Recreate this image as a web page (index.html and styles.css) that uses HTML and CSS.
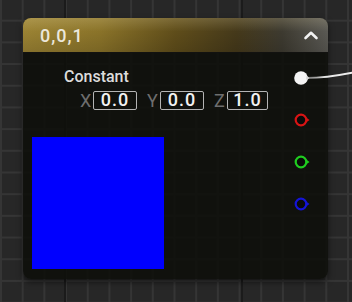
FILE: index.html
```html
<!DOCTYPE html>
<html lang="en">
<head>
    <meta charset="UTF-8">
    <meta name="viewport" content="width=device-width, initial-scale=1.0">
    <title>Constant3Vector</title>
    <link rel="stylesheet" href="styles.css">
</head>
<body>
    <div class="canvas">
        <svg class="wire" width="50" height="20" viewBox="0 0 50 20">
            <defs>
                <linearGradient id="wire-fade" x1="0" x2="1" y1="0" y2="0">
                    <stop offset="0" stop-color="#cfcfcf" stop-opacity="0.5"/>
                    <stop offset="0.4" stop-color="#e8e8e8"/>
                    <stop offset="1" stop-color="#f0f0f0"/>
                </linearGradient>
            </defs>
            <path d="M0 12 C 14 12, 26 11, 50 6" fill="none" stroke="url(#wire-fade)" stroke-width="2"/>
        </svg>

        <div class="node">
            <div class="node-header">
                <span class="node-title">0,0,1</span>
                <svg class="collapse" width="16" height="10" viewBox="0 0 16 10">
                    <path d="M2.5 8 L8 2.8 L13.5 8" fill="none" stroke="#f2f2f2" stroke-width="2.6" stroke-linecap="round" stroke-linejoin="round"/>
                </svg>
            </div>
            <div class="node-body">
                <div class="node-main">
                    <div class="node-label">Constant</div>
                    <div class="vec">
                        <span class="axis">X</span><span class="field">0.0</span>
                        <span class="axis">Y</span><span class="field">0.0</span>
                        <span class="axis">Z</span><span class="field">1.0</span>
                    </div>
                    <div class="swatch"></div>
                </div>
                <div class="pins">
                    <svg class="pin" width="16" height="16" viewBox="0 0 16 16">
                        <circle cx="7" cy="8" r="6.8" fill="#f4f4f4"/>
                        <path d="M12.5 5.5 L15.5 8 L12.5 10.5 Z" fill="#d8d8d8"/>
                    </svg>
                    <svg class="pin" width="16" height="16" viewBox="0 0 16 16">
                        <circle cx="7" cy="8" r="5.3" fill="#0b0b0b" stroke="#d81414" stroke-width="2.2"/>
                        <path d="M12 5.4 L15.5 8 L12 10.6 Z" fill="#d81414"/>
                    </svg>
                    <svg class="pin" width="16" height="16" viewBox="0 0 16 16">
                        <circle cx="7" cy="8" r="5.3" fill="#0b0b0b" stroke="#1fcc1f" stroke-width="2.2"/>
                        <path d="M12 5.4 L15.5 8 L12 10.6 Z" fill="#1fcc1f"/>
                    </svg>
                    <svg class="pin" width="16" height="16" viewBox="0 0 16 16">
                        <circle cx="7" cy="8" r="5.3" fill="#0b0b0b" stroke="#1414d6" stroke-width="2.2"/>
                        <path d="M12 5.4 L15.5 8 L12 10.6 Z" fill="#1414d6"/>
                    </svg>
                </div>
            </div>
        </div>
    </div>
</body>
</html>
```

FILE: styles.css
```css
html, body {
    margin: 0;
    padding: 0;
}
body {
    width: 352px;
    height: 302px;
    overflow: hidden;
    font-family: Roboto, "Liberation Sans", sans-serif;
    background-color: #272727;
    background-image:
        linear-gradient(to right, #1b1b1b 2px, transparent 2px),
        linear-gradient(to right, #353535 2px, transparent 2px),
        linear-gradient(to bottom, #353535 2px, transparent 2px);
    background-size: 177px 100%, 21.7px 21.7px, 21.7px 21.7px;
    background-position: 64px 0, 0 0, 0 -2px;
}
.canvas {
    position: relative;
    padding: 18px 0 0 23px;
}
.wire {
    position: absolute;
    left: 306px;
    top: 66px;
}
.node {
    width: 305px;
    height: 261px;
    display: flex;
    flex-direction: column;
    border-radius: 8px;
    background: rgba(14, 15, 11, 0.9);
    box-shadow: 0 3px 6px rgba(0, 0, 0, 0.55);
    overflow: hidden;
}
.node-header {
    height: 35px;
    display: flex;
    align-items: center;
    justify-content: space-between;
    padding: 0 9px 0 17px;
    background:
        linear-gradient(to bottom, rgba(255, 240, 190, 0.18) 0, rgba(255, 240, 190, 0) 40%, rgba(0, 0, 0, 0.12) 100%),
        linear-gradient(to right, #9a8233 0%, #8a7329 25%, #5f4d1a 50%, #45391a 70%, #3d3a30 85%, #5a5954 100%);
    border-bottom: 1px solid #121210;
    box-sizing: border-box;
}
.node-title {
    color: #ebe7da;
    font-size: 18px;
    font-weight: 500;
    letter-spacing: 1px;
}
.collapse {
    display: block;
}
.node-body {
    flex: 1;
    display: flex;
    justify-content: space-between;
    padding: 0 18px 0 9px;
}
.node-main {
    display: flex;
    flex-direction: column;
}
.node-label {
    margin: 14px 0 0 32px;
    color: #dcdcdc;
    font-size: 16px;
    font-weight: 500;
    line-height: 19px;
}
.vec {
    margin: 5px 0 0 48px;
    display: flex;
    align-items: center;
    height: 19px;
}
.axis {
    color: #6e6e6e;
    font-size: 18px;
    line-height: 19px;
    width: 10px;
    text-align: center;
    margin: 0 3px 0 10px;
}
.axis:first-child {
    margin-left: 0;
}
.field {
    width: 44px;
    height: 19px;
    box-sizing: border-box;
    border: 1.5px solid #b4b4b4;
    border-radius: 2px;
    color: #f2f2f2;
    font-size: 18px;
    font-weight: 500;
    line-height: 16px;
    letter-spacing: 1px;
    text-align: center;
}
.field:last-child {
    width: 41px;
}
.swatch {
    margin-top: 27px;
    width: 132px;
    height: 132px;
    background: #0000ff;
}
.pins {
    padding-top: 17px;
    display: flex;
    flex-direction: column;
    gap: 26px;
}
.pin {
    display: block;
}
```
